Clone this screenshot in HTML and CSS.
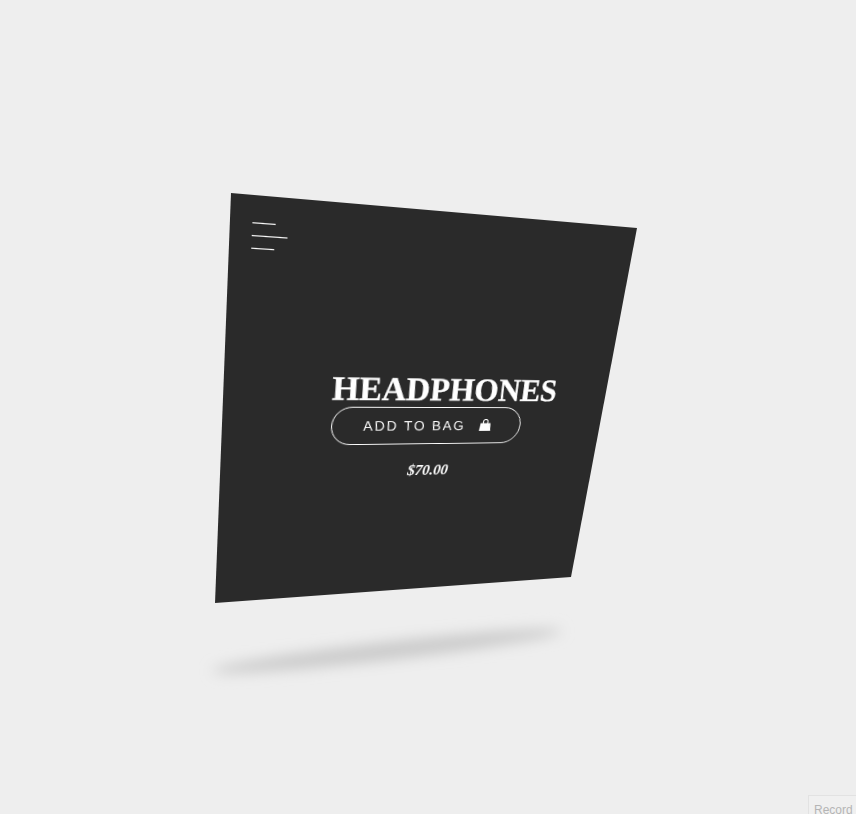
FILE: index.html
```html
<!DOCTYPE html>
<html lang="en">
<head>
<meta charset="utf-8">
<title>Headphones</title>
<link rel="stylesheet" href="styles.css">
</head>
<body>
<main class="stage">
  <svg class="floor-shadow" width="856" height="814" viewBox="0 0 856 814" aria-hidden="true">
    <defs><filter id="soft" x="-20%" y="-200%" width="140%" height="500%"><feGaussianBlur stdDeviation="7"/></filter></defs>
    <ellipse cx="387" cy="651" rx="176" ry="9" transform="rotate(-6.5 387 651)" fill="#cacaca" filter="url(#soft)"/>
  </svg>
  <article class="card">
    <div class="menu"><span class="line short"></span><span class="line long"></span><span class="line short"></span></div>
    <div class="content">
      <h1 class="title">HEADPHONES</h1>
      <button class="buy" type="button">
        <span class="buy-label">ADD TO BAG</span>
        <svg class="bag" width="14" height="14" viewBox="0 0 14 14" aria-hidden="true"><path d="M1.5 4.5h11l.8 8.5H.7z" fill="#fff"/><path d="M4.5 5V3a2.5 2.5 0 0 1 5 0v2" fill="none" stroke="#fff" stroke-width="1.2"/></svg>
      </button>
      <p class="price">$70.00</p>
    </div>
  </article>
</main>
<div class="record">Record</div>
</body>
</html>
```
FILE: styles.css
```css
html, body { margin: 0; height: 100%; background: #eeeeee; overflow: hidden; }
.stage { position: relative; height: 814px; display: flex; align-items: center; justify-content: flex-start; padding-left: 228px; box-sizing: border-box; }
.floor-shadow { position: absolute; left: 0; top: 0; }
.card { position: relative; width: 400px; height: 400px; background: #2a2a2a; flex: none; box-sizing: border-box; padding: 23px 19px; display: flex; flex-direction: column; transform: matrix3d(0.9421,0.00292,0,0.00039744, -0.11284,0.94018,0,0.00037085, 0,0,1,0, -0.876,7.503,0,1); }
.menu { display: flex; flex-direction: column; gap: 9.6px; align-items: flex-start; }
.line { display: block; height: 1.3px; background: #fff; }
.short { width: 20px; }
.long { width: 31px; }
.content { width: 202px; margin: 106.5px 0 0 84px; display: flex; flex-direction: column; align-items: flex-start; }
.title { margin: 1px 0 0 -2px; font: bold 34.4px/38px "Liberation Serif", serif; color: #fff; white-space: nowrap; letter-spacing: -0.1px; -webkit-text-stroke: 0.4px #fff; transform: skewX(2deg); }
.buy { width: 202px; height: 40px; margin-top: 0.5px; padding: 0 32px 0 31px; background: transparent; border: 1px solid #fff; border-radius: 20px; color: #fff; display: flex; align-items: center; justify-content: space-between; font: 14.5px "Liberation Sans", sans-serif; letter-spacing: 1.9px; box-sizing: border-box; }
.buy-label { display: inline-block; transform: skewX(5deg); }
.bag { flex: none; }
.price { align-self: center; margin: 20px 0 0; padding-left: 8px; font: italic bold 16px/18px "Liberation Serif", serif; color: #fff; }
.record { position: fixed; left: 808px; top: 795px; width: 60px; height: 30px; box-sizing: border-box; border: 1px solid #e2e2e2; background: #f0f0f0; padding: 7px 5px; font: 12px "Liberation Sans", sans-serif; color: #b5b5b5; }
```
